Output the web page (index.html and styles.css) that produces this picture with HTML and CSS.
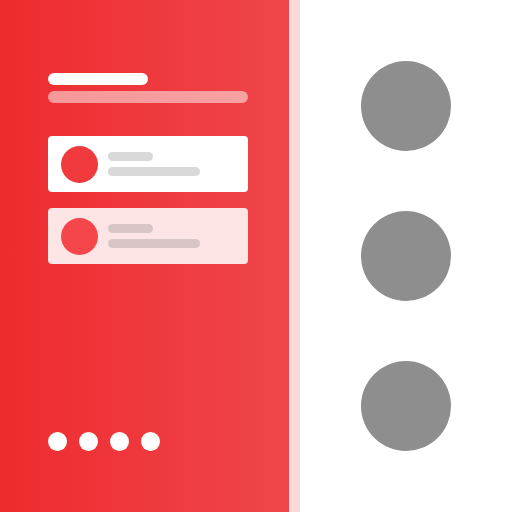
FILE: index.html
```html
<!DOCTYPE html>
<html>
<head>
<meta charset="utf-8">
<link rel="stylesheet" href="styles.css">
</head>
<body>
<div class="page">
  <div class="panel">
    <div class="top">
      <div class="bar bar-title"></div>
      <div class="bar bar-sub"></div>
      <div class="cards">
        <div class="card">
          <div class="avatar"></div>
          <div class="lines">
            <div class="line short"></div>
            <div class="line long"></div>
          </div>
        </div>
        <div class="card card-soft">
          <div class="avatar avatar-soft"></div>
          <div class="lines">
            <div class="line short"></div>
            <div class="line long"></div>
          </div>
        </div>
      </div>
    </div>
    <div class="dots">
      <span class="dot"></span><span class="dot"></span><span class="dot"></span><span class="dot"></span>
    </div>
  </div>
  <div class="strip"></div>
  <div class="side">
    <div class="ball"></div>
    <div class="ball"></div>
    <div class="ball"></div>
  </div>
</div>
</body>
</html>
```
FILE: styles.css
```css
html, body {
  margin: 0;
  padding: 0;
  width: 512px;
  height: 512px;
  overflow: hidden;
  background: #ffffff;
  font-family: "Liberation Sans", sans-serif;
}
.page {
  display: flex;
  width: 512px;
  height: 512px;
}
.panel {
  width: 289px;
  box-sizing: border-box;
  padding: 73px 41px 61px 48px;
  background: linear-gradient(90deg, #ee2b2f 0%, #ef464a 100%);
  display: flex;
  flex-direction: column;
  justify-content: space-between;
}
.top {
  display: flex;
  flex-direction: column;
}
.bar {
  height: 12px;
  border-radius: 6px;
}
.bar-title {
  width: 100px;
  background: #ffffff;
}
.bar-sub {
  width: 200px;
  margin-top: 6px;
  background: rgba(255, 255, 255, 0.5);
}
.cards {
  margin-top: 33px;
  display: flex;
  flex-direction: column;
  gap: 16px;
}
.card {
  width: 200px;
  height: 56px;
  box-sizing: border-box;
  padding: 0 13px;
  border-radius: 4px;
  background: #ffffff;
  display: flex;
  align-items: center;
  gap: 10px;
}
.card-soft {
  background: #fde5e5;
}
.avatar {
  width: 37px;
  height: 37px;
  border-radius: 50%;
  background: #f03a3e;
  flex: none;
}
.avatar-soft {
  background: #f5464a;
}
.lines {
  display: flex;
  flex-direction: column;
  gap: 6px;
}
.line {
  height: 9px;
  border-radius: 5px;
  background: #d9d9d9;
}
.card-soft .line {
  background: #d8c6c7;
}
.line.short { width: 45px; }
.line.long { width: 92px; }
.dots {
  display: flex;
  gap: 12px;
}
.dot {
  width: 19px;
  height: 19px;
  border-radius: 50%;
  background: #ffffff;
}
.strip {
  width: 11px;
  background: #fbd9d9;
}
.side {
  flex: 1;
  display: flex;
  flex-direction: column;
  align-items: center;
  justify-content: center;
  gap: 60px;
}
.ball {
  width: 90px;
  height: 90px;
  border-radius: 50%;
  background: #8e8e8e;
}
```
